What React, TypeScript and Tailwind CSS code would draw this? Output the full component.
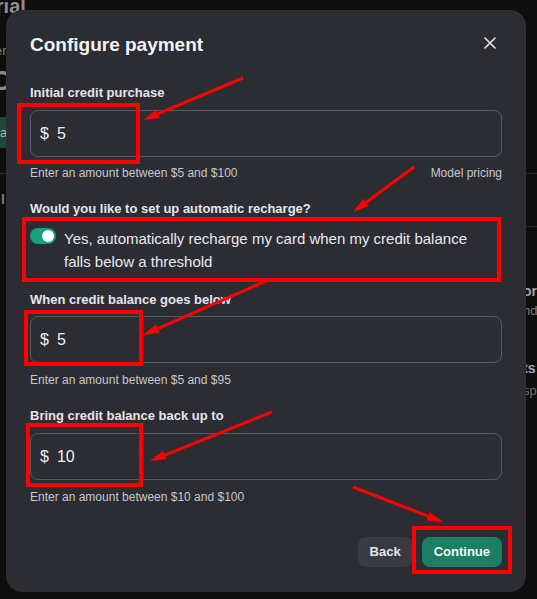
import React from 'react';

type Pt = [number, number];

const arrows: { from: Pt; to: Pt }[] = [
  { from: [243, 78], to: [143, 120] },
  { from: [414, 167], to: [353, 212] },
  { from: [266, 281], to: [143, 335] },
  { from: [272, 412], to: [150, 461] },
  { from: [353, 487], to: [443, 522] },
];

const boxes = [
  { x: 19, y: 105, w: 119, h: 57 },
  { x: 24, y: 219, w: 475, h: 61 },
  { x: 26, y: 312, w: 115, h: 52 },
  { x: 28, y: 425, w: 113, h: 60 },
  { x: 414, y: 528, w: 96, h: 44 },
];

const Arrow = ({ from, to }: { from: Pt; to: Pt }) => {
  const dx = to[0] - from[0];
  const dy = to[1] - from[1];
  const len = Math.hypot(dx, dy);
  const ux = dx / len;
  const uy = dy / len;
  const head = 16;
  const half = 4.5;
  const bx = to[0] - ux * head;
  const by = to[1] - uy * head;
  const pts = [
    `${to[0]},${to[1]}`,
    `${bx - uy * half},${by + ux * half}`,
    `${bx + uy * half},${by - ux * half}`,
  ].join(' ');
  return (
    <g>
      <line x1={from[0]} y1={from[1]} x2={bx} y2={by} stroke="#ff0000" strokeWidth={3} />
      <polygon points={pts} fill="#ff0000" />
    </g>
  );
};

const Label = ({ children, className = '' }: { children: React.ReactNode; className?: string }) => (
  <div className={`text-[13px] leading-4 font-bold text-[#e4e4ea] ${className}`}>{children}</div>
);

const AmountInput = ({ value, className = '' }: { value: string; className?: string }) => (
  <div className={`h-[47px] rounded-lg border border-[#56575f] flex items-center gap-2 pl-[9px] text-[16px] text-[#ececf1] ${className}`}>
    <span>$</span>
    <span>{value}</span>
  </div>
);

const Helper = ({ children, className = '' }: { children: React.ReactNode; className?: string }) => (
  <div className={`text-[12px] leading-4 text-[#c6c6cd] ${className}`}>{children}</div>
);

export default function App() {
  return (
    <div className="relative w-[537px] h-[599px] overflow-hidden bg-[#0e0e0e] font-['Liberation_Sans',Arial,sans-serif]">
      {/* page behind the dialog */}
      <div className="flex h-full">
        <div className="ml-[-46px] w-[80px] shrink-0 flex flex-col">
          <div className="mt-[-6px] text-[20px] leading-6 font-bold text-[#8e8e8e]">Tutorial</div>
          <div className="mt-[25px] ml-[41px] text-[13px] leading-4 text-[#7c7c7c]">er</div>
          <div className="mt-[6px] ml-[37px] text-[28px] leading-8 font-bold text-[#8a8a8a]">C</div>
          <div className="mt-[20px] ml-[30px] w-[60px] h-[31px] bg-[#1c4a3b] pl-[16px] text-[13px] leading-[31px] text-[#9fb8ae]">a</div>
          <div className="mt-[25px] h-px bg-[#2a2a2a]" />
          <div className="mt-[17px] ml-[47px] text-[14px] leading-4 font-bold text-[#777]">I</div>
        </div>
        <div className="ml-auto w-[14px] shrink-0 flex flex-col pt-[173px]">
          <div className="h-px bg-[#262626]" />
          <div className="mt-[52px] h-px bg-[#262626]" />
          <div className="mt-[56px] text-[14px] leading-4 font-bold text-[#a4a4a4]">or</div>
          <div className="mt-[4px] text-[13px] leading-4 text-[#7d7d7d]">nd</div>
          <div className="mt-[41px] text-[14px] leading-4 font-bold text-[#a4a4a4]">ts</div>
          <div className="mt-[7px] text-[13px] leading-4 text-[#6e6e6e]">sp</div>
        </div>
      </div>

      {/* dialog */}
      <div className="absolute left-[6px] top-[10px] w-[520px] h-[582px] rounded-2xl bg-[#2c2d33] px-6 pt-[23px]">
        <div className="flex items-center justify-between h-6">
          <h2 className="text-[19px] leading-6 font-bold text-[#f3f3f5]">Configure payment</h2>
          <svg width="12" height="12" viewBox="0 0 12 12" className="mr-[6px] mt-[-4px]">
            <path d="M1 1L11 11M11 1L1 11" stroke="#e4e4e8" strokeWidth="1.6" strokeLinecap="round" />
          </svg>
        </div>

        <Label className="mt-[28px]">Initial credit purchase</Label>
        <AmountInput value="5" className="mt-[9px]" />
        <div className="mt-[8px] flex justify-between">
          <Helper>Enter an amount between $5 and $100</Helper>
          <Helper>Model pricing</Helper>
        </div>

        <Label className="mt-[20px]">Would you like to set up automatic recharge?</Label>
        <div className="mt-[10px] flex items-start gap-2 pr-[12px]">
          <div className="mt-[1px] w-[26px] h-[16px] rounded-full bg-[#14a07a] flex items-center justify-end pr-[2px] shrink-0">
            <div className="w-[12px] h-[12px] rounded-full bg-white" />
          </div>
          <div className="text-[15px] leading-[23px] text-[#e8e8ee]">
            Yes, automatically recharge my card when my credit balance falls below a threshold
          </div>
        </div>

        <Label className="mt-[19px]">When credit balance goes below</Label>
        <AmountInput value="5" className="mt-[8px]" />
        <Helper className="mt-[9px]">Enter an amount between $5 and $95</Helper>

        <Label className="mt-[20px]">Bring credit balance back up to</Label>
        <AmountInput value="10" className="mt-[9px]" />
        <Helper className="mt-[9px]">Enter an amount between $10 and $100</Helper>

        <div className="mt-[32px] flex justify-end gap-[9px]">
          <button className="h-[30px] px-[12px] rounded-lg bg-[#393a42] text-[13px] font-bold text-[#e6e6ec]">Back</button>
          <button className="h-[30px] px-[12px] rounded-lg bg-[#1a7f63] text-[13px] font-bold text-[#f2f7f5]">Continue</button>
        </div>
      </div>

      {/* annotations */}
      <svg className="absolute inset-0 pointer-events-none" width="537" height="599">
        {boxes.map((b, i) => (
          <rect key={i} x={b.x} y={b.y} width={b.w} height={b.h} fill="none" stroke="#ff0000" strokeWidth={4} />
        ))}
        {arrows.map((a, i) => (
          <Arrow key={i} from={a.from} to={a.to} />
        ))}
      </svg>
    </div>
  );
}
